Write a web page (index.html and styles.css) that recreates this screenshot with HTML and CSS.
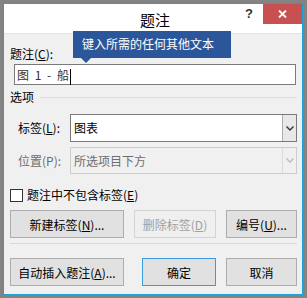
FILE: index.html
```html
<!DOCTYPE html>
<html lang="zh-CN">
<head>
    <meta charset="UTF-8">
    <title>题注</title>
    <link rel="stylesheet" href="styles.css">
</head>
<body>

    <div class="window">
        <div class="titlebar">
            <div></div>
            <div class="title">题注</div>
            <div class="controls">
                <span class="help">?</span>
                <span class="close">
                    <svg width="9" height="8" viewBox="0 0 9 8">
                        <path d="M1 0.5 L8 7.5 M8 0.5 L1 7.5" stroke="#fff" stroke-width="1.8" fill="none"/>
                    </svg>
                </span>
            </div>
        </div>

        <div class="tooltip">键入所需的任何其他文本</div>

        <div class="content">
            <div class="label">题注(<u>C</u>):</div>
            <div class="textbox">图 1 - 船<span class="caret"></span></div>

            <div class="group-head"><span>选项</span></div>

            <div class="field">
                <span class="field-label">标签(<u>L</u>):</span>
                <div class="combo">
                    <span class="combo-text">图表</span>
                    <span class="combo-btn">
                        <svg width="8" height="5" viewBox="0 0 8 5"><path d="M0.5 0.5 L4 4 L7.5 0.5" stroke="#333" stroke-width="1.4" fill="none"/></svg>
                    </span>
                </div>
            </div>

            <div class="field field-second">
                <span class="field-label disabled-text">位置(P):</span>
                <div class="combo combo-disabled">
                    <span class="combo-text">所选项目下方</span>
                    <span class="combo-btn">
                        <svg width="8" height="5" viewBox="0 0 8 5"><path d="M0.5 0.5 L4 4 L7.5 0.5" stroke="#bcbcbc" stroke-width="1.4" fill="none"/></svg>
                    </span>
                </div>
            </div>

            <div class="check-row">
                <span class="checkbox"></span>
                <span>题注中不包含标签(<u>E</u>)</span>
            </div>

            <div class="button-row">
                <button class="btn btn-wide">新建标签(<u>N</u>)...</button>
                <button class="btn btn-mid" disabled>删除标签(<u>D</u>)</button>
                <button class="btn btn-narrow">编号(<u>U</u>)...</button>
            </div>

            <div class="separator"></div>

            <div class="button-row button-row-last">
                <button class="btn btn-wide">自动插入题注(<u>A</u>)...</button>
                <button class="btn btn-ok">确定</button>
                <button class="btn btn-narrow">取消</button>
            </div>
        </div>
    </div>

</body>
</html>
```

FILE: styles.css
```css
html, body {
    margin: 0;
}

body {
    background: #838383;
    padding: 3px;
    font-family: "Noto Sans CJK SC", sans-serif;
    font-size: 12px;
    color: #000;
}

.window {
    position: relative;
    width: 298px;
    height: 290px;
    border: 1px solid #1aa1d6;
    background: #f0f0f0;
    display: flex;
    flex-direction: column;
}

/* Title bar */
.titlebar {
    height: 29px;
    background: #fff;
    border-bottom: 1px solid #e3e3e3;
    display: grid;
    grid-template-columns: 1fr auto 1fr;
}

    .titlebar .title {
        font-size: 15px;
        line-height: 20px;
        padding: 6px 0 0 4px;
        color: #000;
    }

    .titlebar .controls {
        justify-self: end;
        display: flex;
        align-items: flex-start;
    }

    .titlebar .help {
        font-family: "Liberation Sans", sans-serif;
        font-weight: bold;
        font-size: 13px;
        line-height: 20px;
        color: #333;
        margin-right: 10px;
    }

    .titlebar .close {
        width: 39px;
        height: 20px;
        background: #c75050;
        display: flex;
        align-items: center;
        justify-content: center;
    }

/* Tooltip lies over the title bar edge */
.tooltip {
    position: absolute;
    left: 69px;
    top: 27px;
    width: 149px;
    height: 27px;
    padding-left: 9px;
    background: #2b579a;
    color: #fff;
    line-height: 26px;
    z-index: 2;
}

    .tooltip::after {
        content: "";
        position: absolute;
        left: 8px;
        top: 27px;
        border-left: 5px solid transparent;
        border-right: 5px solid transparent;
        border-top: 5px solid #2b579a;
    }

/* Body */
.content {
    padding: 12px 5px 0 6px;
}

.label {
    line-height: 16px;
}

.textbox {
    margin: 2px 1px 0 4px;
    height: 19px;
    border: 1px solid #7a7a7a;
    background: #fff;
    line-height: 19px;
    padding-left: 2px;
    color: #333;
    word-spacing: 3px;
}

    .textbox .caret {
        display: inline-block;
        width: 1px;
        height: 16px;
        background: #000;
        vertical-align: middle;
        margin-left: 1px;
    }

.group-head {
    margin-top: 4px;
    display: flex;
    align-items: center;
    gap: 6px;
    line-height: 16px;
}

    .group-head::after {
        content: "";
        flex: 1;
        border-top: 1px solid #dcdcdc;
    }

.field {
    display: flex;
    align-items: center;
    margin-top: 9px;
    padding-left: 8px;
}

.field-second {
    margin-top: 5px;
}

.field-label {
    width: 52px;
    line-height: 16px;
}

.disabled-text {
    color: #6d6d6d;
}

.combo {
    flex: 1;
    height: 26px;
    border: 1px solid #7a7a7a;
    background: #fff;
    display: flex;
}

    .combo .combo-text {
        flex: 1;
        padding-left: 3px;
        line-height: 26px;
    }

    .combo .combo-btn {
        width: 13px;
        border-left: 1px solid #acacac;
        background: #e8e8e8;
        display: flex;
        align-items: center;
        justify-content: center;
    }

.combo-disabled {
    height: 25px;
    border-color: #cccccc;
    background: #f0f0f0;
    color: #6d6d6d;
}

    .combo-disabled .combo-text {
        line-height: 25px;
    }

    .combo-disabled .combo-btn {
        border-left-color: #dadada;
        background: #f0f0f0;
    }

.check-row {
    margin-top: 13px;
    display: flex;
    align-items: center;
    gap: 4px;
    line-height: 16px;
}

    .check-row .checkbox {
        width: 11px;
        height: 11px;
        border: 1px solid #333;
        background: #fff;
    }

.button-row {
    margin-top: 7px;
    display: flex;
    gap: 10px;
}

.button-row-last {
    margin-top: 14px;
}

.btn {
    height: 28px;
    padding: 0;
    border: 1px solid #adadad;
    background: #e1e1e1;
    font-family: inherit;
    font-size: 12px;
    color: #000;
}

    .btn:disabled {
        border-color: #d4d4d4;
        background: #efefef;
        color: #a0a0a0;
    }

.btn-wide {
    width: 114px;
}

.btn-mid {
    width: 82px;
}

.btn-narrow {
    width: 71px;
}

.btn-ok {
    width: 74px;
    margin-left: 8px;
    border-color: #3a9be0;
}

.separator {
    margin-top: 5px;
    border-top: 1px solid #d8d8d8;
}
```
